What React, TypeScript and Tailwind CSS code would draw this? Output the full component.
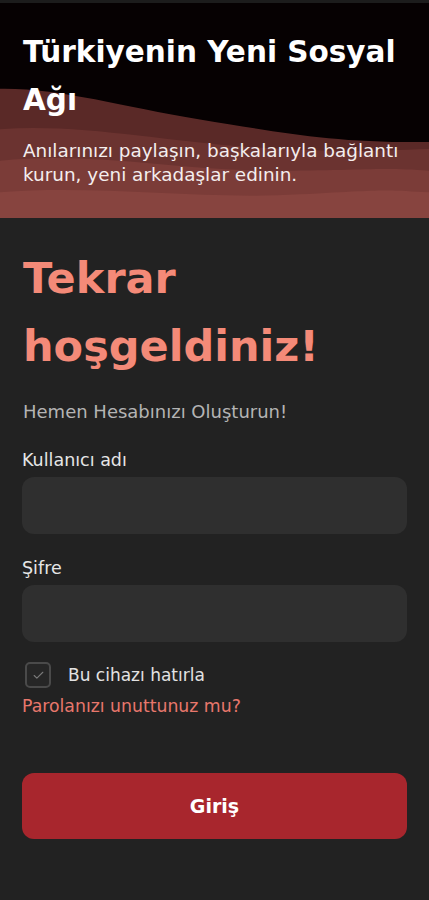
import { Check } from 'lucide-react';

const font = { fontFamily: '"DejaVu Sans", "Noto Sans", sans-serif' };

function Waves() {
  return (
    <svg
      aria-hidden="true"
      className="absolute inset-0 h-full w-full"
      viewBox="0 0 429 218"
      preserveAspectRatio="none"
    >
      <path d="M0 87 C 60 86, 120 105, 200 118 S 330 142, 429 141 L429 218 L0 218 Z" fill="#5a2927" />
      <path d="M0 128 C 80 122, 160 140, 250 146 S 370 150, 429 148 L429 218 L0 218 Z" fill="#6b3330" />
      <path d="M0 160 C 90 150, 180 170, 270 170 S 380 166, 429 170 L429 218 L0 218 Z" fill="#7b3c38" />
      <path d="M0 192 C 100 184, 200 200, 300 194 S 390 190, 429 192 L429 218 L0 218 Z" fill="#87443f" />
    </svg>
  );
}

function Field({ label, type = 'text' }: { label: string; type?: string }) {
  return (
    <div>
      <label className="block text-[17.5px] leading-[24px] text-[#e6e6e6]">{label}</label>
      <input
        type={type}
        className="mt-[5px] block h-[57px] w-full rounded-[12px] bg-[#2f2f2f] px-4 text-[16px] text-white outline-none"
      />
    </div>
  );
}

export default function App() {
  return (
    <div className="min-h-[900px] w-[429px] overflow-hidden bg-[#222222]" style={font}>
      <header className="relative h-[218px] overflow-hidden border-t-[3px] border-[#1c1c1c] bg-[#060102]">
        <Waves />
        <div className="relative px-[23px] pt-[25px]">
          <h1 className="text-[29.5px] font-bold leading-[48px] text-white">Türkiyenin Yeni Sosyal Ağı</h1>
          <p className="mt-[15px] text-[18.4px] leading-[24px] text-[#f4eeee]">
            Anılarınızı paylaşın, başkalarıyla bağlantı kurun, yeni arkadaşlar edinin.
          </p>
        </div>
      </header>

      <main className="px-[22px] pt-[26px]">
        <h2 className="pl-px text-[43px] font-bold leading-[68px] text-[#f48a78]">
          Tekrar
          <br />
          hoşgeldiniz!
        </h2>
        <p className="mt-[20px] pl-px text-[18px] leading-[24px] text-[#b4b4b4]">Hemen Hesabınızı Oluşturun!</p>

        <div className="mt-[24px]">
          <Field label="Kullanıcı adı" />
        </div>
        <div className="mt-[22px]">
          <Field label="Şifre" type="password" />
        </div>

        <label className="mt-[20px] flex items-center gap-[17px] pl-[3px]">
          <span className="flex h-[26px] w-[26px] items-center justify-center rounded-[5px] border-2 border-[#4a4a4a] bg-[#262626]">
            <Check size={13} strokeWidth={2} className="text-[#7a7a7a]" />
          </span>
          <span className="text-[17px] leading-[24px] text-[#e2e2e2]">Bu cihazı hatırla</span>
        </label>
        <a href="#" className="mt-[6px] block text-[17.3px] leading-[24px] text-[#e8776c]">
          Parolanızı unuttunuz mu?
        </a>

        <button
          type="button"
          className="mt-[55px] flex h-[66px] w-full items-center justify-center rounded-[12px] bg-[#a8262d] text-[19px] font-bold text-white"
        >
          Giriş
        </button>

        <p className="mt-[58px] text-center text-[17px] text-[#d0d0d0]">Kayıt Ol</p>
      </main>
    </div>
  );
}
